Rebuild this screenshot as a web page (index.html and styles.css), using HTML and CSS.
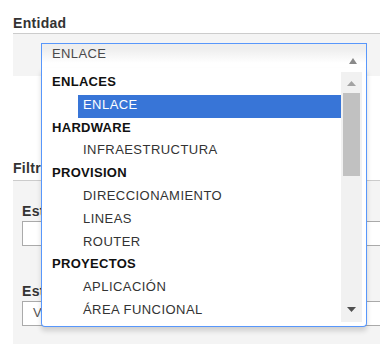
FILE: index.html
```html
<!DOCTYPE html>
<html lang="es">
<head>
<meta charset="utf-8">
<title>Entidad</title>
<link rel="stylesheet" href="styles.css">
</head>
<body>
<div class="page">
  <section class="block">
    <h3 class="block-title title-entidad">Entidad</h3>
    <div class="panel panel-entidad">
      <div class="chosen">
        <div class="chosen-single">
          <span class="single-text">ENLACE</span>
          <svg class="single-arrow" width="8" height="6" viewBox="0 0 8 6"><polygon points="0,6 4,0 8,6" fill="#8a8a8a"/></svg>
        </div>
        <div class="chosen-drop">
          <div class="results">
            <ul class="results-list">
              <li class="group">ENLACES</li>
              <li class="option highlighted">ENLACE</li>
              <li class="group">HARDWARE</li>
              <li class="option">INFRAESTRUCTURA</li>
              <li class="group">PROVISION</li>
              <li class="option">DIRECCIONAMIENTO</li>
              <li class="option">LINEAS</li>
              <li class="option">ROUTER</li>
              <li class="group">PROYECTOS</li>
              <li class="option">APLICACIÓN</li>
              <li class="option">ÁREA FUNCIONAL</li>
            </ul>
            <div class="scrollbar">
              <div class="sb-btn sb-up"><svg width="9" height="5" viewBox="0 0 9 5"><polygon points="0,5 4.5,0 9,5" fill="#a3a3a3"/></svg></div>
              <div class="sb-track"><div class="sb-thumb"></div></div>
              <div class="sb-btn sb-down"><svg width="9" height="5" viewBox="0 0 9 5"><polygon points="0,0 9,0 4.5,5" fill="#505050"/></svg></div>
            </div>
          </div>
        </div>
      </div>
    </div>
  </section>
  <section class="block block-filtros">
    <h3 class="block-title title-filtros">Filtros</h3>
    <div class="panel panel-filtros">
      <label class="field-label">Estado</label>
      <div class="input"></div>
      <label class="field-label field-label-2">Estatus</label>
      <div class="input">Vigente</div>
    </div>
  </section>
</div>
</body>
</html>
```
FILE: styles.css
```css
html, body {
  margin: 0;
  padding: 0;
  overflow: hidden;
  background: #fff;
}
body {
  font-family: "Liberation Sans", Arial, sans-serif;
  font-size: 13px;
  color: #333;
}
.page {
  padding-left: 13px;
}
.block-title {
  margin: 0;
  font-size: 14px;
  font-weight: bold;
  line-height: 15px;
  color: #333;
  letter-spacing: 0.3px;
  border-bottom: 1px solid #cccccc;
}
.title-entidad {
  padding-top: 16px;
  padding-bottom: 2px;
}
.title-filtros {
  margin-top: 85px;
  padding-bottom: 4px;
}
.panel {
  background: #f4f4f4;
}
.panel-entidad {
  padding: 9px 0 8px 28px;
}
.chosen {
  position: relative;
  width: 326px;
}
.chosen-single {
  box-sizing: border-box;
  height: 25px;
  border: 1px solid #5897fb;
  border-bottom: 0;
  background: linear-gradient(#eeeeee 20%, #ffffff 80%);
  display: flex;
  padding: 0 9px 0 10px;
}
.single-text {
  line-height: 20px;
  padding-bottom: 4px;
  color: #4a4a4a;
  letter-spacing: 0.4px;
}
.single-arrow {
  margin-left: auto;
  margin-top: 14px;
}
.chosen-drop {
  position: absolute;
  top: 100%;
  left: 0;
  z-index: 10;
  box-sizing: border-box;
  width: 326px;
  background: #fff;
  border: 1px solid #5897fb;
  border-top: 0;
  border-radius: 0 0 4px 4px;
  box-shadow: 0 4px 5px rgba(0, 0, 0, 0.15);
  padding: 4px;
}
.results {
  display: flex;
  height: 250px;
}
.results-list {
  list-style: none;
  margin: 0;
  padding: 0;
  width: 295px;
}
.results-list li {
  line-height: 20.8px;
  padding-bottom: 2px;
  white-space: nowrap;
}
.group {
  font-weight: bold;
  color: #111;
  padding-left: 6px;
  letter-spacing: 0.3px;
}
.option {
  color: #333;
  margin-left: 32px;
  padding-left: 5px;
  letter-spacing: 0.45px;
}
.option.highlighted {
  background: #3875d7;
  color: #fff;
}
.scrollbar {
  width: 21px;
  background: #f1f1f1;
  display: flex;
  flex-direction: column;
}
.sb-btn {
  height: 21px;
  display: flex;
  justify-content: center;
}
.sb-up svg {
  margin-top: 9px;
}
.sb-down svg {
  margin-top: 6px;
}
.sb-track {
  flex: 1;
  padding: 0 2px;
}
.sb-thumb {
  height: 83px;
  background: #c1c1c1;
}
.panel-filtros {
  padding: 23px 0 18px 9px;
}
.field-label {
  display: block;
  font-size: 14px;
  font-weight: bold;
  line-height: 15px;
  color: #333;
  letter-spacing: 0.3px;
}
.field-label-2 {
  margin-top: 38px;
}
.input {
  box-sizing: border-box;
  margin-top: 2px;
  height: 25px;
  border: 1px solid #aaaaaa;
  border-right: 0;
  background: #fff;
  padding: 0 10px 2px;
  line-height: 21px;
  color: #555;
}
```
